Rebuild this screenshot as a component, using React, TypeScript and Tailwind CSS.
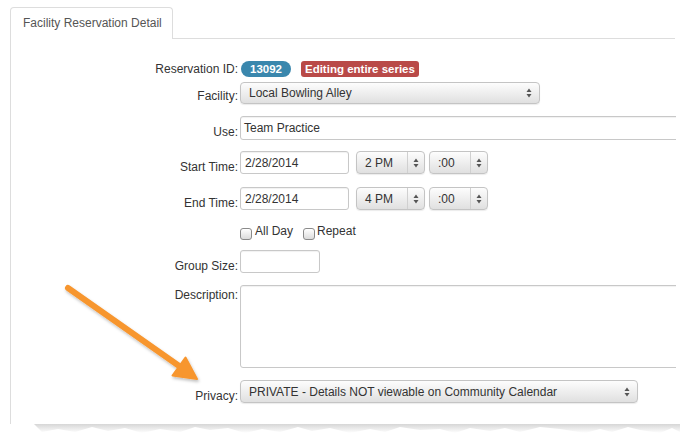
import React from "react";

function Arrows() {
  return (
    <svg width="6" height="10" viewBox="0 0 6 10" className="shrink-0">
      <path d="M3 0.5 L5.5 4 L0.5 4 Z" fill="#555" />
      <path d="M3 9.5 L5.5 6 L0.5 6 Z" fill="#555" />
    </svg>
  );
}

function Select({
  className,
  text,
  sep,
  padClass,
  arrowClass,
}: {
  className: string;
  text: string;
  sep?: boolean;
  padClass: string;
  arrowClass: string;
}) {
  return (
    <div
      className={
        "flex items-center border border-[#c4c4c4] rounded-[4px] bg-linear-to-b from-[#fdfdfd] to-[#e0e0e0] shadow-[0_1px_1px_rgba(0,0,0,0.08)] " +
        className
      }
    >
      <div className={"flex-1 leading-[14px] text-[#333] " + padClass}>{text}</div>
      {sep ? <div className="self-stretch w-px bg-[#d0d0d0]" /> : null}
      <div className={"flex items-center justify-center " + arrowClass}>
        <Arrows />
      </div>
    </div>
  );
}

function Label({ children, className }: { children: React.ReactNode; className?: string }) {
  return (
    <div className={"w-[229px] shrink-0 text-right pr-[2px] leading-[14px] text-[#333] " + (className || "")}>
      {children}
    </div>
  );
}

function Checkbox() {
  return (
    <span className="inline-block w-[12px] h-[12px] rounded-[3px] border border-[#8a8a8a] bg-linear-to-b from-white to-[#dcdcdc] shadow-[inset_0_1px_0_rgba(255,255,255,0.8)]" />
  );
}

export default function App() {
  return (
    <div className="w-[680px] h-[433px] bg-white relative overflow-hidden font-['Liberation_Sans',Arial,sans-serif] text-[12px] text-[#333]">
      <div className="flex items-end pt-[7px]">
        <div className="ml-[10px] w-[163px] h-[32px] border border-b-0 border-[#dddddd] rounded-t-[4px] pl-[12px] pt-[8px] text-[#555] leading-[14px]">
          Facility Reservation Detail
        </div>
        <div className="flex-1 border-b border-[#dddddd] mr-[5px]" />
      </div>

      <div className="ml-[10px] w-[666px] overflow-hidden border-l border-[#dddddd] h-[385px] flex flex-col">
        <div className="mt-[22px] h-[16px] flex items-center">
          <Label>Reservation ID:</Label>
          <span className="ml-[1px] h-[16px] px-[9px] rounded-full bg-[#3a87ad] text-white font-bold text-[11.5px] leading-[16px]">
            13092
          </span>
          <span className="ml-[10px] h-[16px] px-[4px] rounded-[3px] bg-[#b94a48] text-white font-bold text-[11.5px] leading-[16px]">
            Editing entire series
          </span>
        </div>

        <div className="mt-[5px] h-[22px] flex items-end">
          <Label className="pb-[1px]">Facility:</Label>
          <Select
            className="w-[300px] h-[22px]"
            text="Local Bowling Alley"
            padClass="pl-[8px]"
            arrowClass="w-[20px]"
          />
        </div>

        <div className="mt-[12px] h-[24px] flex items-end">
          <Label className="pb-[1px]">Use:</Label>
          <div className="w-[450px] h-[24px] shrink-0 border border-[#c8c8c8] rounded-[3px] shadow-[inset_0_1px_1px_rgba(0,0,0,0.06)] flex items-center pl-[3px] leading-[14px]">
            Team Practice
          </div>
        </div>

        <div className="mt-[11px] h-[23px] flex items-end">
          <Label>Start Time:</Label>
          <div className="w-[109px] h-[23px] border border-[#c8c8c8] rounded-[3px] shadow-[inset_0_1px_1px_rgba(0,0,0,0.06)] flex items-center pl-[4px] leading-[14px]">
            2/28/2014
          </div>
          <Select
            className="ml-[7px] w-[69px] h-[23px]"
            text="2 PM"
            sep
            padClass="pl-[8px]"
            arrowClass="w-[16px]"
          />
          <Select
            className="ml-[4px] w-[59px] h-[23px]"
            text=":00"
            sep
            padClass="pl-[8px]"
            arrowClass="w-[16px]"
          />
        </div>

        <div className="mt-[13px] h-[23px] flex items-end">
          <Label>End Time:</Label>
          <div className="w-[109px] h-[23px] border border-[#c8c8c8] rounded-[3px] shadow-[inset_0_1px_1px_rgba(0,0,0,0.06)] flex items-center pl-[4px] leading-[14px]">
            2/28/2014
          </div>
          <Select
            className="ml-[7px] w-[69px] h-[23px]"
            text="4 PM"
            sep
            padClass="pl-[8px]"
            arrowClass="w-[16px]"
          />
          <Select
            className="ml-[4px] w-[59px] h-[23px]"
            text=":00"
            sep
            padClass="pl-[8px]"
            arrowClass="w-[16px]"
          />
        </div>

        <div className="mt-[14px] h-[16px] flex items-start">
          <div className="w-[229px] shrink-0" />
          <div className="mt-[4px] flex">
            <Checkbox />
          </div>
          <span className="ml-[3px] leading-[14px]">All Day</span>
          <div className="ml-[10px] mt-[4px] flex">
            <Checkbox />
          </div>
          <span className="ml-[2px] leading-[14px]">Repeat</span>
        </div>

        <div className="mt-[10px] h-[23px] flex items-end">
          <Label>Group Size:</Label>
          <div className="w-[80px] h-[23px] border border-[#c8c8c8] rounded-[3px] shadow-[inset_0_1px_1px_rgba(0,0,0,0.06)]" />
        </div>

        <div className="mt-[12px] h-[83px] flex items-start">
          <Label className="pt-[3px]">Description:</Label>
          <div className="w-[450px] h-[83px] shrink-0 border border-[#c8c8c8] rounded-[3px] shadow-[inset_0_1px_1px_rgba(0,0,0,0.06)]" />
        </div>

        <div className="mt-[12px] h-[23px] flex items-end">
          <Label>Privacy:</Label>
          <Select
            className="w-[398px] h-[23px]"
            text="PRIVATE - Details NOT viewable on Community Calendar"
            padClass="pl-[8px]"
            arrowClass="w-[20px]"
          />
        </div>
      </div>

      <svg width="680" height="10" viewBox="0 0 680 10" className="block">
        <defs>
          <linearGradient id="torn" x1="0" y1="0" x2="0" y2="1">
            <stop offset="0" stopColor="#d6d6d6" />
            <stop offset="1" stopColor="#ffffff" />
          </linearGradient>
        </defs>
        <path
          d="M34 0 L680 0 L680 8 L672 4 L660 9 L640 6 L628 3 L612 8 L600 5 L585 9 L560 5 L540 3 L520 8 L505 4 L490 7 L470 4 L455 9 L440 5 L420 6 L400 3 L385 8 L370 5 L350 9 L330 4 L312 7 L298 3 L280 8 L262 5 L245 9 L228 4 L210 6 L195 3 L180 8 L160 5 L142 9 L125 4 L108 7 L92 3 L75 8 L58 5 L42 8 Z"
          fill="url(#torn)"
        />
      </svg>

      <svg
        width="680"
        height="433"
        viewBox="0 0 680 433"
        className="absolute left-0 top-0 pointer-events-none"
      >
        <defs>
          <filter id="sh" x="-20%" y="-20%" width="140%" height="140%">
            <feDropShadow dx="1" dy="2" stdDeviation="1.5" floodColor="#000" floodOpacity="0.25" />
          </filter>
        </defs>
        <g filter="url(#sh)">
          <line x1="68" y1="288" x2="182" y2="368" stroke="#f7962f" strokeWidth="6" strokeLinecap="round" />
          <path d="M197 379 L172.5 375.5 L185.5 357.5 Z" fill="#f7962f" stroke="#f7962f" strokeWidth="2" strokeLinejoin="round" />
        </g>
      </svg>
    </div>
  );
}
